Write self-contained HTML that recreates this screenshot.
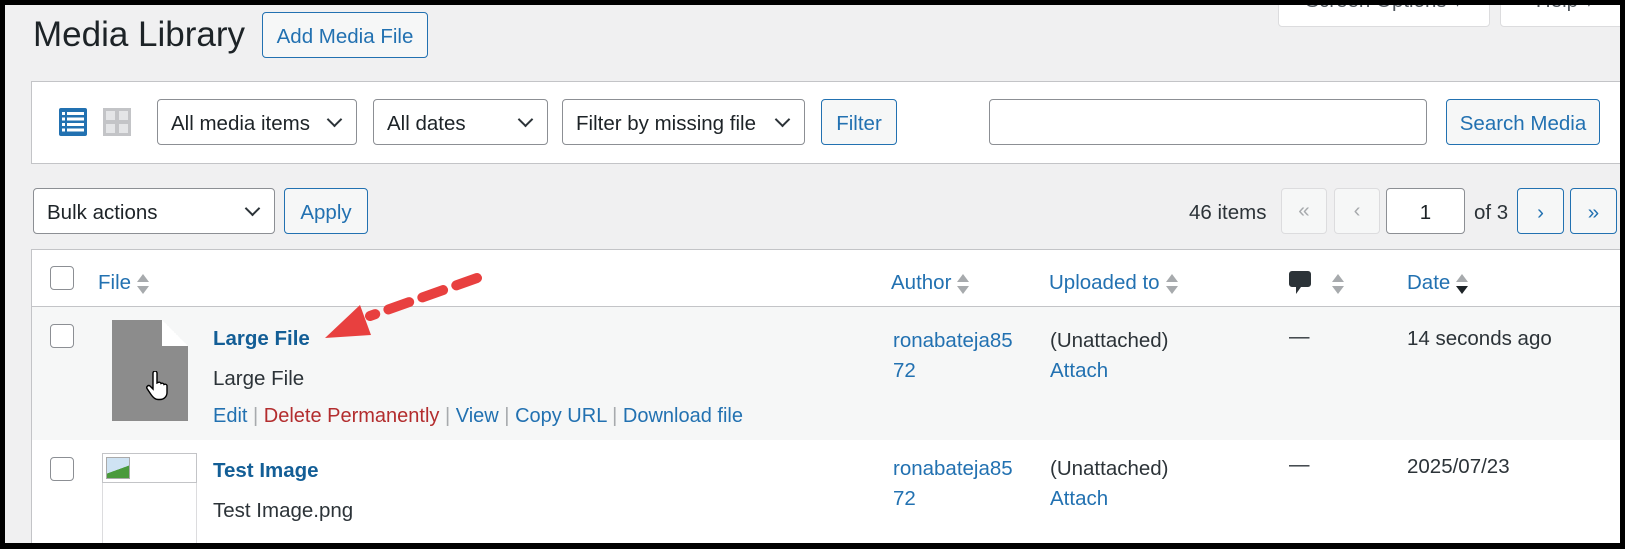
<!DOCTYPE html><html><head><style>
*{box-sizing:border-box;margin:0;padding:0}
body{width:1625px;height:549px;overflow:hidden;background:#000;position:relative;font-family:"Liberation Sans",sans-serif;font-size:20.5px;color:#1d2327}
.a{position:absolute}
.pg{left:5px;top:5px;width:1615px;height:538px;background:#f0f0f1;overflow:hidden}
.btn{position:absolute;border:1px solid #2271b1;border-radius:4px;background:#f6f7f7;color:#2271b1;display:flex;align-items:center;justify-content:center;padding-top:3px}
.sel{position:absolute;border:1px solid #8c8f94;border-radius:4px;background:#fff;display:flex;align-items:center;padding-left:13px;height:46px;padding-top:3px}
.sel:after{content:"";position:absolute;right:16px;top:14px;width:9px;height:9px;border-right:2px solid #2c3338;border-bottom:2px solid #2c3338;transform:rotate(45deg)}
.lnk{color:#2271b1}
.cb{position:absolute;left:45px;width:24px;height:24px;border:1px solid #8c8f94;border-radius:4px;background:#fff}
.srt{display:inline-block;vertical-align:middle;margin-left:6px;width:12px;height:20px;position:relative}
.srt:before{content:"";position:absolute;top:0;left:0;border:6px solid transparent;border-bottom:8px solid #a7aaad;border-top:0}
.srt:after{content:"";position:absolute;bottom:0;left:0;border:6px solid transparent;border-top:8px solid #a7aaad;border-bottom:0}
.srt.d:after{border-top-color:#1d2327}
.pb{position:absolute;top:183px;height:46px;width:46px;border:1px solid #dcdcde;border-radius:4px;background:#f6f7f7;color:#a7aaad;display:flex;align-items:center;justify-content:center}
</style></head><body>
<div class="a pg">
<div class="a" style="left:1273px;top:-20px;width:212px;height:42px;background:#fff;border:1px solid #dcdcde;border-radius:4px;text-align:center;color:#50575e;line-height:30px">Screen Options ▾</div>
<div class="a" style="left:1495px;top:-20px;width:130px;height:42px;background:#fff;border:1px solid #dcdcde;border-radius:4px;text-align:center;color:#50575e;line-height:30px">Help ▾</div>
<div class="a" style="left:28px;top:10px;font-size:35px;color:#1d2327">Media Library</div>
<div class="btn" style="left:257px;top:7px;width:166px;height:46px">Add Media File</div>

<div class="a" style="left:26px;top:76px;width:1600px;height:83px;background:#fff;border:1px solid #c3c4c7"></div>
<svg class="a" style="left:54px;top:103px" width="28" height="28" viewBox="0 0 28 28"><rect width="28" height="28" rx="2" fill="#2271b1"/><g fill="#fff"><rect x="3" y="4" width="3" height="3"/><rect x="8" y="4" width="17" height="3"/><rect x="3" y="9.5" width="3" height="3"/><rect x="8" y="9.5" width="17" height="3"/><rect x="3" y="15" width="3" height="3"/><rect x="8" y="15" width="17" height="3"/><rect x="3" y="20.5" width="3" height="3"/><rect x="8" y="20.5" width="17" height="3"/></g></svg>
<svg class="a" style="left:98px;top:103px" width="28" height="28" viewBox="0 0 28 28"><rect width="28" height="28" fill="#c3c4c7"/><g fill="#e4e5e7"><rect x="3" y="3" width="9" height="9"/><rect x="16" y="3" width="9" height="9"/><rect x="3" y="16" width="9" height="9"/><rect x="16" y="16" width="9" height="9"/></g></svg>
<div class="sel" style="left:152px;top:94px;width:200px">All media items</div>
<div class="sel" style="left:368px;top:94px;width:175px">All dates</div>
<div class="sel" style="left:557px;top:94px;width:243px">Filter by missing file</div>
<div class="btn" style="left:816px;top:94px;width:76px;height:46px">Filter</div>
<div class="a" style="left:984px;top:94px;width:438px;height:46px;background:#fff;border:1px solid #8c8f94;border-radius:4px"></div>
<div class="btn" style="left:1441px;top:94px;width:154px;height:46px">Search Media</div>

<div class="sel" style="left:28px;top:183px;width:242px">Bulk actions</div>
<div class="btn" style="left:279px;top:183px;width:84px;height:46px">Apply</div>
<div class="a" style="left:1184px;top:196px;color:#2c3338">46 items</div>
<div class="pb" style="left:1276px">«</div>
<div class="pb" style="left:1329px">‹</div>
<div class="a" style="left:1381px;top:183px;width:79px;height:46px;background:#fff;border:1px solid #8c8f94;border-radius:4px;text-align:center;line-height:48px">1</div>
<div class="a" style="left:1469px;top:196px;color:#2c3338">of 3</div>
<div class="btn" style="left:1512px;top:183px;width:47px;height:46px">›</div>
<div class="btn" style="left:1565px;top:183px;width:47px;height:46px">»</div>

<div class="a" style="left:26px;top:244px;width:1600px;height:300px;background:#fff;border:1px solid #c3c4c7"></div>
<div class="a" style="left:27px;top:301px;width:1600px;height:1px;background:#c3c4c7"></div>
<div class="a" style="left:27px;top:302px;width:1600px;height:133px;background:#f6f7f7"></div>
<div class="cb" style="top:261px"></div>
<div class="a lnk" style="left:93px;top:266px">File<span class="srt"></span></div>
<div class="a lnk" style="left:886px;top:266px">Author<span class="srt"></span></div>
<div class="a lnk" style="left:1044px;top:266px">Uploaded to<span class="srt"></span></div>
<svg class="a" style="left:1284px;top:266px" width="22" height="26" viewBox="0 0 22 26"><path d="M3 0h16a3 3 0 0 1 3 3v10a3 3 0 0 1-3 3H12l-5 7v-7H3a3 3 0 0 1-3-3V3a3 3 0 0 1 3-3z" fill="#2c3338"/></svg>
<span class="a srt" style="left:1321px;top:266px"></span>
<div class="a lnk" style="left:1402px;top:266px">Date<span class="srt d"></span></div>

<div class="cb" style="top:319px"></div>
<div class="a" style="left:107px;top:315px;width:76px;height:101px;background:#8c8c8c"></div>
<div class="a" style="left:157px;top:315px;width:26px;height:26px;background:linear-gradient(to top right,#fff 50%,#f6f7f7 50%)"></div>
<svg class="a" style="left:141px;top:366px" width="22" height="30" viewBox="0 0 22 30"><path d="M7 2a2 2 0 0 1 4 0v10l1-.5a2 2 0 0 1 3 1 2 2 0 0 1 3 1 2 2 0 0 1 3 1v7c0 4-3 7-7 7h-2c-3 0-5-2-7-5l-4-6a2 2 0 0 1 3-2.5L7 18z" fill="#fff" stroke="#000" stroke-width="1.4"/></svg>
<div class="a" style="left:208px;top:322px;font-weight:bold;font-size:20.5px;color:#135e96">Large File</div>
<div class="a" style="left:208px;top:362px;color:#2c3338">Large File</div>
<div class="a" style="left:208px;top:400px;color:#a7aaad;white-space:nowrap;font-size:20px"><span class="lnk">Edit</span> | <span style="color:#b32d2e">Delete Permanently</span> | <span class="lnk">View</span> | <span class="lnk">Copy URL</span> | <span class="lnk">Download file</span></div>
<div class="a lnk" style="left:888px;top:321px;line-height:30px">ronabateja85<br>72</div>
<div class="a" style="left:1045px;top:321px;line-height:30px;color:#2c3338">(Unattached)<br><span class="lnk">Attach</span></div>
<div class="a" style="left:1284px;top:320px;color:#2c3338">—</div>
<div class="a" style="left:1402px;top:322px;color:#2c3338">14 seconds ago</div>

<div class="cb" style="top:452px"></div>
<div class="a" style="left:97px;top:448px;width:95px;height:100px;border:1px solid #dcdcde;border-top:0"></div>
<div class="a" style="left:97px;top:448px;width:95px;height:30px;border:1px solid #c3c4c7;background:#fff"></div>
<div class="a" style="left:101px;top:452px;width:24px;height:22px;background:linear-gradient(160deg,#cfe3f3 55%,#4a9a3c 56%);border:1px solid #aaa"></div>
<div class="a" style="left:208px;top:454px;font-weight:bold;color:#135e96">Test Image</div>
<div class="a" style="left:208px;top:494px;color:#2c3338">Test Image.png</div>
<div class="a lnk" style="left:888px;top:449px;line-height:30px">ronabateja85<br>72</div>
<div class="a" style="left:1045px;top:449px;line-height:30px;color:#2c3338">(Unattached)<br><span class="lnk">Attach</span></div>
<div class="a" style="left:1284px;top:448px;color:#2c3338">—</div>
<div class="a" style="left:1402px;top:450px;color:#2c3338">2025/07/23</div>

<svg class="a" style="left:0;top:0" width="700" height="400"><line x1="472" y1="273" x2="365" y2="311" stroke="#e8403f" stroke-width="10" stroke-linecap="round" stroke-dasharray="22 14"/><polygon points="320,333 355,300 366,330" fill="#e8403f"/></svg>
</div>
</body></html>
